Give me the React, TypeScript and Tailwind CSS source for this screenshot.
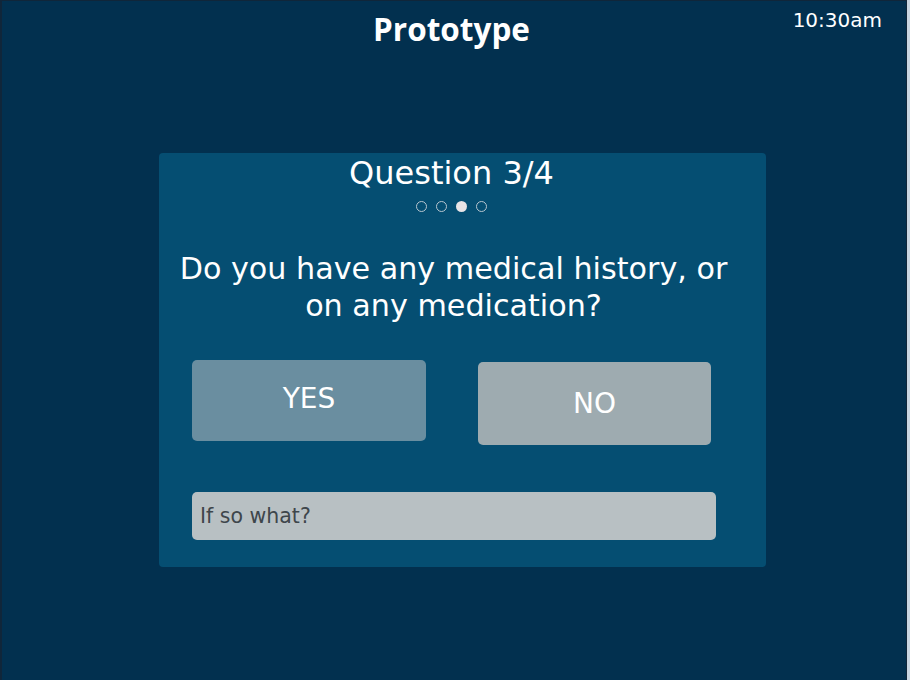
import React from "react";

export default function App() {
  const font = { fontFamily: '"DejaVu Sans", "Liberation Sans", sans-serif' };
  return (
    <div className="w-[910px] h-[680px] flex bg-[#c9d6e2]">
      <div
        className="w-[907px] h-[680px] bg-[#02304f] border-l-2 border-t border-r border-[#10263a] flex flex-col relative"
        style={font}
      >
        <div className="absolute right-[24px] top-[4px] text-white text-[20px]">10:30am</div>
        <div
          className="mt-[9px] self-center ml-[-5px] text-white text-[31.5px] font-bold leading-[38px]"
          style={{ fontFamily: '"Open Sans", sans-serif' }}
        >
          Prototype
        </div>
        <div className="mt-[105px] ml-[157px] w-[607px] h-[414px] bg-[#054e72] rounded-[4px] flex flex-col pl-[33px]">
          <div className="w-[519px] flex flex-col items-center">
            <div className="text-white text-[32px] leading-[38px] pt-[1px]">Question 3/4</div>
            <div className="mt-[9px] flex gap-[9px] items-center">
              <span className="w-[11px] h-[11px] rounded-full border-[1.5px] border-[#b8c6d0]" />
              <span className="w-[11px] h-[11px] rounded-full border-[1.5px] border-[#b8c6d0]" />
              <span className="w-[11px] h-[11px] rounded-full bg-[#e8e4e6]" />
              <span className="w-[11px] h-[11px] rounded-full border-[1.5px] border-[#b8c6d0]" />
            </div>
            <div className="mt-[38px] ml-[4px] text-white text-[30.2px] leading-[37px] text-center whitespace-nowrap">
              Do you have any medical history, or
              <br />
              on any medication?
            </div>
          </div>
          <div className="mt-[36px] w-[519px] flex justify-between items-start">
            <div className="w-[234px] h-[81px] rounded-[5px] bg-[#6a8ea0] flex items-center justify-center text-white text-[28px] pb-[4px]">
              YES
            </div>
            <div className="mt-[2px] w-[233px] h-[83px] rounded-[5px] bg-[#9eabb0] flex items-center justify-center text-white text-[28px]">
              NO
            </div>
          </div>
          <div className="mt-[47px] w-[524px] h-[48px] rounded-[5px] bg-[#b8c0c3] flex items-center px-[8px] text-[#3e464b] text-[20.5px]">
            If so what?
          </div>
        </div>
      </div>
    </div>
  );
}
